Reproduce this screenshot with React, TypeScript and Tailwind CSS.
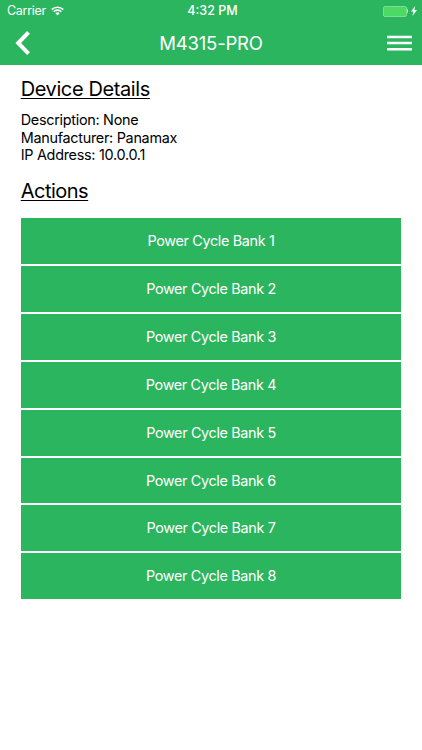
const details = [
    { label: "Description", value: "None" },
    { label: "Manufacturer", value: "Panamax" },
    { label: "IP Address", value: "10.0.0.1" },
]

const banks = [1, 2, 3, 4, 5, 6, 7, 8]

const StatusBar = () => {
    return (
        <div className="grid grid-cols-3 items-center h-[22px] pl-[7px] pr-[5px] text-[12.5px] leading-none">
            <div className="flex items-center gap-x-[5px]">
                <span className="tracking-[-0.3px]">Carrier</span>
                <svg width="13" height="10" viewBox="0 0 13 10" fill="none" stroke="currentColor">
                    <path d="M0.7 3.6a8.2 8.2 0 0 1 11.6 0" strokeWidth="1.6" />
                    <path d="M2.7 5.7a5.4 5.4 0 0 1 7.6 0" strokeWidth="1.6" />
                    <path d="M6.5 9.4 4.4 7.3a3 3 0 0 1 4.2 0Z" fill="currentColor" stroke="none" />
                </svg>
            </div>
            <p className="pl-px text-center font-medium">4:32 PM</p>
            <div className="flex items-center justify-end">
                <div className="w-[24px] h-[11px] rounded-[2px] border border-[#7fdc95] bg-[#4cd964]" />
                <div className="w-[1.5px] h-[4px] rounded-r bg-[#b5ebc6]" />
                <svg className="ml-[3px]" width="6" height="10" viewBox="0 0 6 10" fill="currentColor">
                    <path d="M4.2 0 0 5.6h2.4L1.5 10 6 4.1H3.4Z" />
                </svg>
            </div>
        </div>
    )
}

const Header = () => {
    return (
        <header className="h-[65.4px] bg-[#2cb55f] text-white">
            <StatusBar />
            <div className="flex items-center justify-between h-[42px] pl-[15px] pr-[10px]">
                <button className="w-[20px]" aria-label="Back">
                    <svg width="16" height="26" viewBox="0 0 16 26" fill="none" stroke="currentColor" strokeWidth="4">
                        <path d="M13.5 2.4 3.2 13l10.3 10.6" />
                    </svg>
                </button>
                <h1 className="pt-px text-[18.5px] tracking-[-0.2px]">M4315-PRO</h1>
                <button aria-label="Menu">
                    <svg width="25" height="16" viewBox="0 0 25 16" stroke="currentColor" strokeWidth="2.5">
                        <path d="M0 2h25M0 8.1h25M0 14.3h25" />
                    </svg>
                </button>
            </div>
        </header>
    )
}

const App = () => {
    return (
        <div className="min-h-screen bg-white text-black font-['Inter','Liberation_Sans',sans-serif]">
            <Header />
            <main className="px-[20.7px]">
                <h2 className="pt-[11px] text-[20px] leading-[26px] tracking-[-0.4px] underline underline-offset-2 decoration-1">
                    Device Details
                </h2>
                <div className="mt-[9px] text-[14.4px] leading-[17.3px] tracking-[-0.28px]">
                    {details.map((item) => (
                        <p key={item.label}>
                            {item.label}: {item.value}
                        </p>
                    ))}
                </div>
                <h2 className="mt-[15px] text-[20px] leading-[26px] tracking-[-0.5px] underline underline-offset-2 decoration-1">
                    Actions
                </h2>
                <div className="flex flex-col gap-y-[2px] mt-[14px]">
                    {banks.map((bank) => (
                        <button key={bank} className="h-[45.85px] bg-[#2cb55f] text-white text-[14.4px] tracking-[-0.35px]">
                            Power Cycle Bank {bank}
                        </button>
                    ))}
                </div>
            </main>
        </div>
    )
}

export default App
